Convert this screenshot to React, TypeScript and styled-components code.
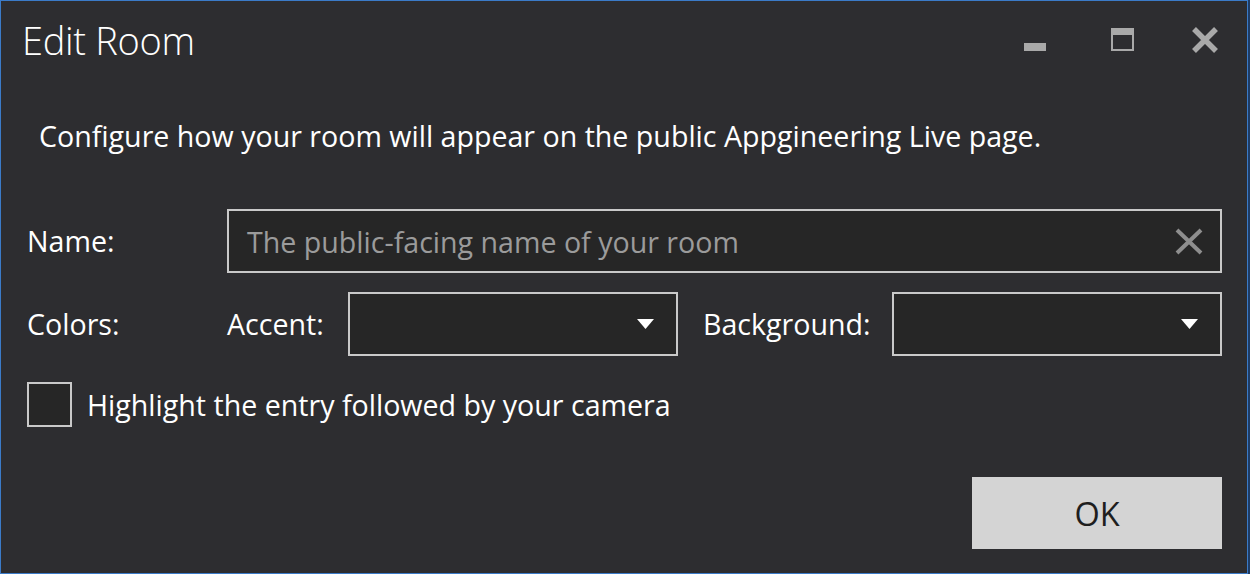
import React from "react";
import styled, { createGlobalStyle } from "styled-components";

const Global = createGlobalStyle`
  html, body { margin: 0; padding: 0; background: #1f3d66; }
  body { font-family: "Open Sans", "Noto Sans", sans-serif; }
  * { box-sizing: border-box; }
`;

const Page = styled.div`
  width: 1250px;
  height: 574px;
  display: flex;
  background: #1f3d66;
`;

const Window = styled.div`
  width: 1248px;
  height: 574px;
  border: 1px solid #3b7bc8;
  background: #2d2d30;
  color: #ffffff;
  display: flex;
  flex-direction: column;
`;

const TitleBar = styled.div`
  height: 80px;
  display: flex;
  align-items: flex-start;
  justify-content: space-between;
`;

const Title = styled.h1`
  margin: 0;
  padding: 14px 0 0 21px;
  font-size: 38px;
  font-weight: 300;
  line-height: 50px;
  letter-spacing: -0.3px;
`;

const Controls = styled.div`
  display: flex;
  align-items: flex-start;
  padding: 25px 29px 0 0;
`;

const CtrlButton = styled.button<{ $w: number }>`
  width: ${(p) => p.$w}px;
  height: 30px;
  padding: 0;
  border: none;
  background: transparent;
  display: flex;
  align-items: flex-start;
  justify-content: flex-end;
  cursor: default;
  & svg { display: block; }
`;

const Body = styled.div`
  flex: 1;
  display: flex;
  flex-direction: column;
  padding: 0 25px 24px 26px;
`;

const Description = styled.p`
  margin: 35px 0 0 12px;
  font-size: 28.6px;
  line-height: 40px;
`;

const Form = styled.div`
  margin-top: 53px;
  display: grid;
  grid-template-columns: 200px 1fr;
  row-gap: 19px;
  align-items: center;
`;

const Label = styled.label<{ $width?: number }>`
  font-size: 28.6px;
  line-height: 40px;
  ${(p) => (p.$width ? `width: ${p.$width}px; flex: none;` : "")}
`;

const Field = styled.div<{ $width?: number }>`
  height: 64px;
  border: 2px solid #c9c9c9;
  background: #262626;
  display: flex;
  align-items: center;
  justify-content: space-between;
  ${(p) => (p.$width ? `width: ${p.$width}px; flex: none;` : "")}
`;

const Placeholder = styled.span`
  padding-left: 18px;
  font-size: 28.6px;
  color: #9b9b9b;
`;

const ClearIcon = styled.span`
  margin-right: 17px;
  display: flex;
`;

const Arrow = styled.span`
  margin-right: 22px;
  display: flex;
`;

const ColorRow = styled.div`
  display: flex;
  align-items: center;
`;

const Gap = styled.div<{ $w: number }>`
  width: ${(p) => p.$w}px;
  flex: none;
`;

const CheckRow = styled.div`
  margin-top: 26px;
  display: flex;
  align-items: center;
  gap: 15px;
`;

const CheckBox = styled.span`
  width: 45px;
  height: 45px;
  border: 2px solid #c9c9c9;
  background: #262626;
  flex: none;
`;

const Footer = styled.div`
  margin-top: auto;
  display: flex;
  justify-content: flex-end;
`;

const OkButton = styled.button`
  width: 250px;
  height: 72px;
  border: none;
  background: #d4d4d4;
  color: #1e1e1e;
  font-family: "Open Sans", "Noto Sans", sans-serif;
  font-size: 32.5px;
  padding: 0;
`;

const Triangle = () => (
  <svg width="17" height="10" viewBox="0 0 17 10">
    <polygon points="0,0 17,0 8.5,10" fill="#ffffff" />
  </svg>
);

export default function App() {
  return (
    <Page>
      <Global />
      <Window>
        <TitleBar>
          <Title>Edit Room</Title>
          <Controls>
            <CtrlButton $w={85} aria-label="Minimize">
              <svg width="23" height="26" viewBox="0 0 23 26">
                <rect x="0" y="17" width="22" height="8" fill="#a9a9a9" />
              </svg>
            </CtrlButton>
            <CtrlButton $w={87} aria-label="Maximize">
              <svg width="23" height="26" viewBox="0 0 23 26">
                <rect x="0" y="2" width="23" height="23" fill="#a9a9a9" />
                <rect x="2" y="9" width="19" height="14" fill="#2d2d30" />
              </svg>
            </CtrlButton>
            <CtrlButton $w={84} aria-label="Close">
              <svg width="26" height="27" viewBox="0 0 26 27">
                <path d="M2 3 L24 25 M24 3 L2 25" stroke="#a9a9a9" strokeWidth="5.5" />
              </svg>
            </CtrlButton>
          </Controls>
        </TitleBar>
        <Body>
          <Description>
            Configure how your room will appear on the public Appgineering Live page.
          </Description>
          <Form>
            <Label>Name:</Label>
            <Field>
              <Placeholder>The public-facing name of your room</Placeholder>
              <ClearIcon>
                <svg width="28" height="27" viewBox="0 0 28 27">
                  <path d="M2 2 L26 25 M26 2 L2 25" stroke="#8e8e8e" strokeWidth="4" />
                </svg>
              </ClearIcon>
            </Field>
            <Label>Colors:</Label>
            <ColorRow>
              <Label $width={121}>Accent:</Label>
              <Field $width={330}>
                <span />
                <Arrow>
                  <Triangle />
                </Arrow>
              </Field>
              <Gap $w={25} />
              <Label $width={189}>Background:</Label>
              <Field $width={330}>
                <span />
                <Arrow>
                  <Triangle />
                </Arrow>
              </Field>
            </ColorRow>
          </Form>
          <CheckRow>
            <CheckBox />
            <Label>Highlight the entry followed by your camera</Label>
          </CheckRow>
          <Footer>
            <OkButton>OK</OkButton>
          </Footer>
        </Body>
      </Window>
    </Page>
  );
}
